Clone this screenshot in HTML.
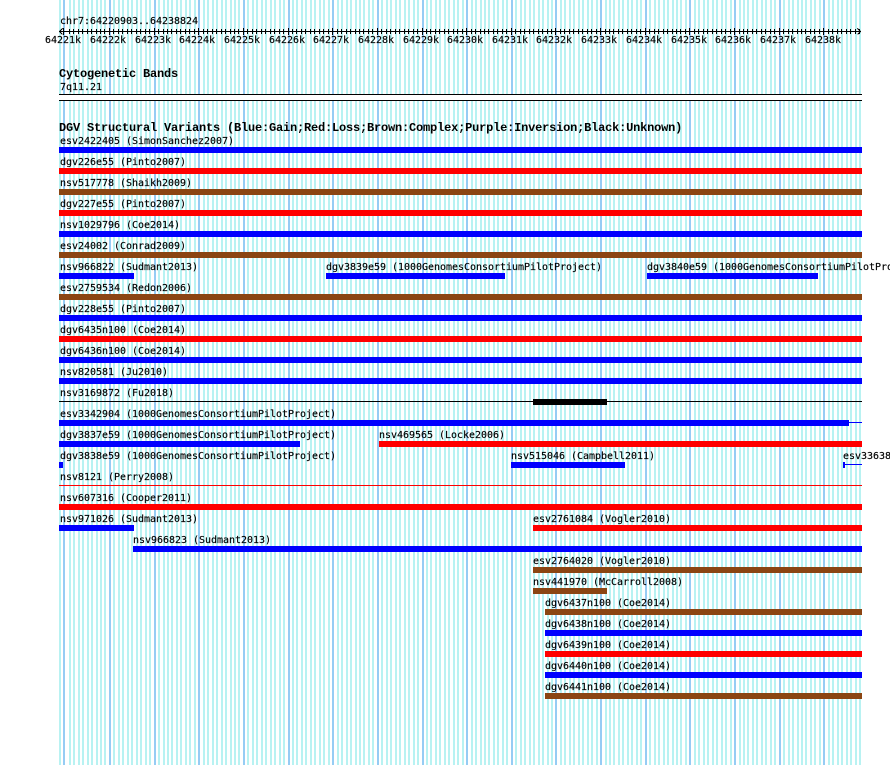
<!DOCTYPE html>
<html>
<head>
<meta charset="utf-8">
<style>
html,body{margin:0;padding:0;background:#fff;width:890px;height:765px;overflow:hidden}
svg{display:block;position:absolute;left:0;top:0}
text{font-family:"DejaVu Sans Mono","Liberation Mono",monospace;font-size:10px;letter-spacing:-0.02px;fill:#000;stroke:#000;stroke-width:.15px;white-space:pre}
text.b{font-family:"Liberation Mono",monospace;font-weight:bold;font-size:12px;letter-spacing:-0.2px;stroke:none}
</style>
</head>
<body>
<svg id="s" xmlns="http://www.w3.org/2000/svg" width="890" height="765" viewBox="0 0 890 765" shape-rendering="crispEdges">
<g id="grid"></g>
<rect x="59" y="94" width="803" height="7" fill="#fff"/>
<rect x="59" y="94" width="803" height="1" fill="#000"/>
<rect x="59" y="100" width="803" height="1" fill="#000"/>

<rect x="59" y="31" width="802" height="1" fill="#000"/>
<g id="ticks"></g>
<path d="M62.5 28.5L59.5 31.5L62.5 34.5M857.5 28.5L860.5 31.5L857.5 34.5" fill="none" stroke="#000" stroke-width="1"/>

<text x="60" y="24">chr7:64220903..64238824</text>
<text x="45" y="43">64221k</text><text x="90" y="43">64222k</text><text x="135" y="43">64223k</text><text x="179" y="43">64224k</text><text x="224" y="43">64225k</text><text x="269" y="43">64226k</text><text x="313" y="43">64227k</text><text x="358" y="43">64228k</text><text x="403" y="43">64229k</text><text x="447" y="43">64230k</text><text x="492" y="43">64231k</text><text x="536" y="43">64232k</text><text x="581" y="43">64233k</text><text x="626" y="43">64234k</text><text x="671" y="43">64235k</text><text x="715" y="43">64236k</text><text x="760" y="43">64237k</text><text x="805" y="43">64238k</text>

<text class="b" x="59" y="77">Cytogenetic Bands</text>
<text x="60" y="90">7q11.21</text>
<text class="b" x="59" y="131">DGV Structural Variants (Blue:Gain;Red:Loss;Brown:Complex;Purple:Inversion;Black:Unknown)</text>

<g fill="#0000ff">
<rect x="59" y="147" width="803" height="6"/>
<rect x="59" y="231" width="803" height="6"/>
<rect x="59" y="273" width="75" height="6"/>
<rect x="326" y="273" width="179" height="6"/>
<rect x="647" y="273" width="171" height="6"/>
<rect x="59" y="315" width="803" height="6"/>
<rect x="59" y="357" width="803" height="6"/>
<rect x="59" y="378" width="803" height="6"/>
<rect x="59" y="420" width="790" height="6"/>
<rect x="849" y="422" width="13" height="1"/>
<rect x="59" y="441" width="241" height="6"/>
<rect x="59" y="462" width="4" height="6"/>
<rect x="511" y="462" width="114" height="6"/>
<rect x="843" y="462" width="2" height="6"/>
<rect x="845" y="464" width="17" height="1"/>
<rect x="59" y="525" width="75" height="6"/>
<rect x="133" y="546" width="729" height="6"/>
<rect x="545" y="630" width="317" height="6"/>
<rect x="545" y="672" width="317" height="6"/>
</g>
<g fill="#ff0000">
<rect x="59" y="168" width="803" height="6"/>
<rect x="59" y="210" width="803" height="6"/>
<rect x="59" y="336" width="803" height="6"/>
<rect x="379" y="441" width="483" height="6"/>
<rect x="59" y="485" width="803" height="1"/>
<rect x="59" y="504" width="803" height="6"/>
<rect x="533" y="525" width="329" height="6"/>
<rect x="545" y="651" width="317" height="6"/>
</g>
<g fill="#8b4513">
<rect x="59" y="189" width="803" height="6"/>
<rect x="59" y="252" width="803" height="6"/>
<rect x="59" y="294" width="803" height="6"/>
<rect x="533" y="567" width="329" height="6"/>
<rect x="533" y="588" width="74" height="6"/>
<rect x="545" y="609" width="317" height="6"/>
<rect x="545" y="693" width="317" height="6"/>
</g>
<g fill="#000">
<rect x="59" y="401" width="803" height="1"/>
<rect x="533" y="399" width="74" height="6"/>
</g>

<text x="60" y="144">esv2422405 (SimonSanchez2007)</text>
<text x="60" y="165">dgv226e55 (Pinto2007)</text>
<text x="60" y="186">nsv517778 (Shaikh2009)</text>
<text x="60" y="207">dgv227e55 (Pinto2007)</text>
<text x="60" y="228">nsv1029796 (Coe2014)</text>
<text x="60" y="249">esv24002 (Conrad2009)</text>
<text x="60" y="270">nsv966822 (Sudmant2013)</text>
<text x="326" y="270">dgv3839e59 (1000GenomesConsortiumPilotProject)</text>
<text x="647" y="270">dgv3840e59 (1000GenomesConsortiumPilotProject)</text>
<text x="60" y="291">esv2759534 (Redon2006)</text>
<text x="60" y="312">dgv228e55 (Pinto2007)</text>
<text x="60" y="333">dgv6435n100 (Coe2014)</text>
<text x="60" y="354">dgv6436n100 (Coe2014)</text>
<text x="60" y="375">nsv820581 (Ju2010)</text>
<text x="60" y="396">nsv3169872 (Fu2018)</text>
<text x="60" y="417">esv3342904 (1000GenomesConsortiumPilotProject)</text>
<text x="60" y="438">dgv3837e59 (1000GenomesConsortiumPilotProject)</text>
<text x="379" y="438">nsv469565 (Locke2006)</text>
<text x="60" y="459">dgv3838e59 (1000GenomesConsortiumPilotProject)</text>
<text x="511" y="459">nsv515046 (Campbell2011)</text>
<text x="843" y="459">esv33638</text>
<text x="60" y="480">nsv8121 (Perry2008)</text>
<text x="60" y="501">nsv607316 (Cooper2011)</text>
<text x="60" y="522">nsv971026 (Sudmant2013)</text>
<text x="533" y="522">esv2761084 (Vogler2010)</text>
<text x="133" y="543">nsv966823 (Sudmant2013)</text>
<text x="533" y="564">esv2764020 (Vogler2010)</text>
<text x="533" y="585">nsv441970 (McCarroll2008)</text>
<text x="545" y="606">dgv6437n100 (Coe2014)</text>
<text x="545" y="627">dgv6438n100 (Coe2014)</text>
<text x="545" y="648">dgv6439n100 (Coe2014)</text>
<text x="545" y="669">dgv6440n100 (Coe2014)</text>
<text x="545" y="690">dgv6441n100 (Coe2014)</text>
</svg>
<script>
(function(){
  var minor='', major='', tm='', tj='';
  minor+='M60 0V765';
  for(var k=0;k<=178;k++){
    var x=Math.round(64.3+4.465*k);
    if(k===0) x=63;
    if(k%10===0){
      major+='M'+(x+1)+' 0V765';
      tj+='M'+(x+.5)+' 28V35';
    }else{
      minor+='M'+(x+1)+' 0V765';
      tm+='M'+(x+.5)+' 29V34';
    }
  }
  var ns='http://www.w3.org/2000/svg';
  function p(parent,d,c,w){var e=document.createElementNS(ns,'path');e.setAttribute('d',d);e.setAttribute('stroke',c);e.setAttribute('stroke-width',w);e.setAttribute('fill','none');document.getElementById(parent).appendChild(e);}
  p('grid',minor,'#b8f2f2',2);
  p('grid',major,'#96ccf4',2);
  p('ticks',tm,'#000',1);
  p('ticks',tj,'#000',1);
})();
</script>
</body>
</html>
